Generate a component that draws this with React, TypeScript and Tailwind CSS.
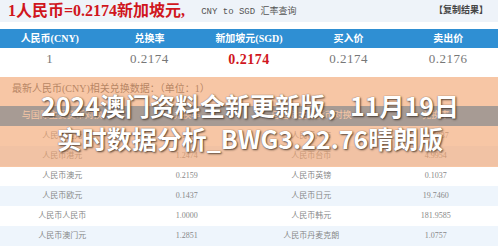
const serif = "font-['Liberation_Serif','Noto_Sans_CJK_SC',serif]";

const topCols = ["人民币(CNY)", "兑换率", "新加坡元(SGD)", "买入价", "卖出价"];

const rows: [string, string, string, string][] = [
  ["人民币美元", "0.1382", "人民币卢布", "13.7837"],
  ["人民币港元", "1.2474", "人民币台币", "4.9954"],
  ["人民币澳元", "0.2159", "人民币英镑", "0.1037"],
  ["人民币欧元", "0.1437", "人民币日元", "19.7460"],
  ["人民币人民币", "1.0000", "人民币韩元", "181.9585"],
  ["人民币澳门元", "1.2851", "人民币丹麦克朗", "1.0757"],
];

export default function App() {
  return (
    <div className={`relative w-[498px] h-[247px] overflow-hidden bg-white ${serif}`}>
      {/* title bar */}
      <div className="h-[22px] bg-[#eef3f9] flex items-center pl-[8px] pr-[10px]">
        <span className="text-[16px] font-bold text-[#d0161d] leading-none">1人民币=0.2174新加坡元,</span>
        <span className="ml-[16px] text-[9px] text-[#555] font-['Liberation_Mono','Noto_Sans_CJK_SC',monospace] mt-[3px]">
          CNY to SGD 汇率查询
        </span>
        <span className="ml-auto text-[9px] text-[#444] font-bold">【复制结果】</span>
      </div>
      <div className="h-[7px]" />

      {/* main rate table */}
      <div className="h-[19px] grid grid-cols-5 bg-[#2f8fd3] text-white text-[10px] font-bold">
        {topCols.map(c => (
          <div key={c} className="flex items-center justify-center">{c}</div>
        ))}
      </div>
      <div className="h-[22px] grid grid-cols-5 text-[13px] text-[#777] tracking-[0.5px]">
        <div className="flex items-center justify-center">1</div>
        <div className="flex items-center justify-center">0.2174</div>
        <div className="flex items-center justify-center text-[14px] font-bold text-[#d0161d]">0.2174</div>
        <div className="flex items-center justify-center">0.2174</div>
        <div className="flex items-center justify-center">0.2176</div>
      </div>

      {/* related section */}
      <div className="h-[36px] flex items-center pl-[12px] pt-[1px] text-[10px] text-[#555]">
        最新人民币(CNY)相关兑换数据：（单位：1）
      </div>
      <div className="h-[20px] grid grid-cols-4 bg-[#2f8fd3] text-white text-[9px]">
        <div className="flex items-center justify-center">与国际主要货币对换</div>
        <div className="flex items-center justify-center">兑换率</div>
        <div className="flex items-center justify-center">与国际主要货币对换</div>
        <div className="flex items-center justify-center">兑换率</div>
      </div>
      {rows.map((r, i) => (
        <div key={i} className={`h-[20px] grid grid-cols-4 text-[8px] text-[#888] ${i % 2 ? "bg-[#eef5fc]" : "bg-white"}`}>
          <div className="flex items-center justify-center">{r[0]}</div>
          <div className="flex items-center justify-center">{r[1]}</div>
          <div className="flex items-center justify-center">{r[2]}</div>
          <div className="flex items-center justify-center">{r[3]}</div>
        </div>
      ))}

      {/* overlay banner */}
      <div className="absolute left-0 right-0 top-[77px] h-[90px] bg-[rgba(242,163,110,0.62)] flex flex-col items-center justify-center pl-[2px]">
        <div className="font-['Noto_Sans_CJK_SC',sans-serif] font-bold text-white text-[25px] leading-[33px] text-center [text-shadow:1px_1px_2px_rgba(40,30,20,0.75),0_0_1px_rgba(40,30,20,0.6)]">
          <div>2024澳门资料全新更新版，11月19日</div>
          <div>实时数据分析_BWG3.22.76晴朗版</div>
        </div>
      </div>
    </div>
  );
}
